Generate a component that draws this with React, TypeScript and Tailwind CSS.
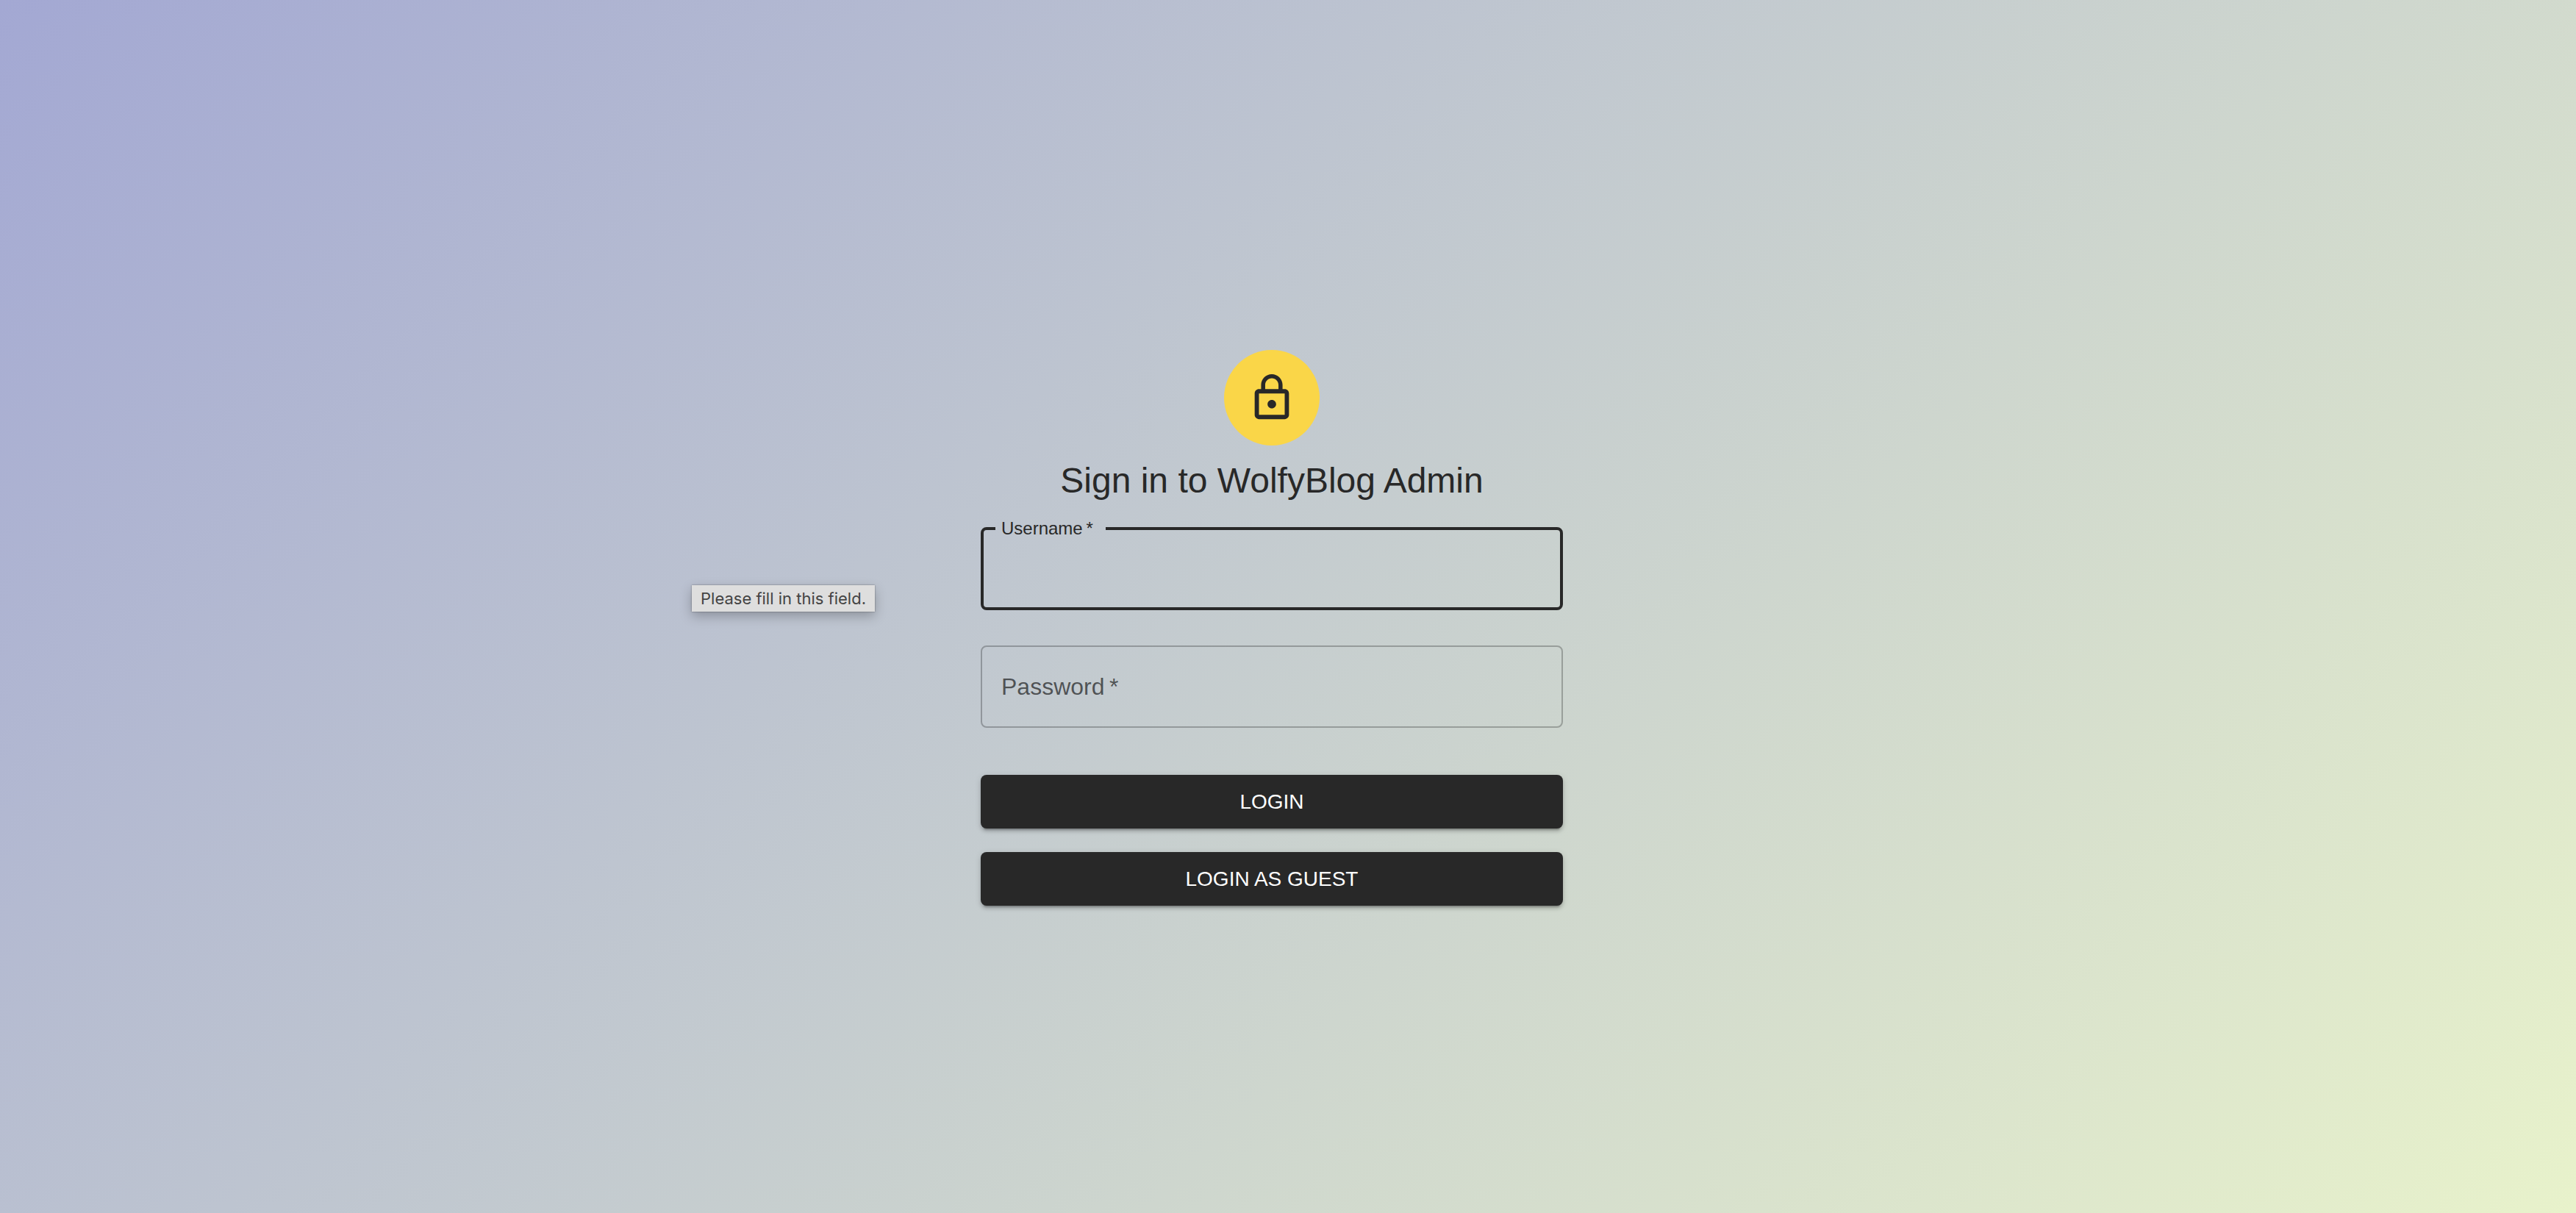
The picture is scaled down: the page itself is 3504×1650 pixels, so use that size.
import React from "react";

function LockIcon() {
  return (
    <svg viewBox="0 0 24 24" className="size-[70px]" fill="#282828" aria-hidden="true">
      <path d="M12 17c1.1 0 2-.9 2-2s-.9-2-2-2-2 .9-2 2 .9 2 2 2m6-9h-1V6c0-2.76-2.24-5-5-5S7 3.24 7 6v2H6c-1.1 0-2 .9-2 2v10c0 1.100.9 2 2 2h12c1.100 0 2-.9 2-2V10c0-1.100-.9-2-2-2M8.900 6c0-1.710 1.390-3.100 3.100-3.100s3.100 1.390 3.100 3.100v2H8.900zM18 20H6V10h12z" />
    </svg>
  );
}

function ActionButton({ type, children }: { type: "submit" | "button"; children: React.ReactNode }) {
  return (
    <button
      type={type}
      className="h-[73px] w-full rounded-lg bg-[#282828] text-[28px] leading-[49px] text-white uppercase shadow-[0_6px_2px_-4px_rgba(0,0,0,0.2),0_4px_4px_0_rgba(0,0,0,0.14),0_2px_10px_0_rgba(0,0,0,0.12)]"
    >
      {children}
    </button>
  );
}

export default function App() {
  return (
    <main className="flex min-h-screen flex-col items-center justify-center bg-[linear-gradient(135deg,#a3a8d3_0%,#e8f2cb_100%)] pt-[58px] pr-11 font-['Liberation_Sans',Arial,sans-serif] text-[#282828]">
      <div className="flex size-[130px] items-center justify-center rounded-full bg-[#fad648]">
        <LockIcon />
      </div>
      <h1 className="mt-4 text-[48px] leading-[64px]">Sign in to WolfyBlog Admin</h1>

      <form className="mt-[21px] w-full max-w-[792px]" onSubmit={(e) => e.preventDefault()}>
        <div className="relative">
          <fieldset className="rounded-lg border-4 border-[#282828]">
            <legend className="ml-4 w-[150px] px-2 text-[24px] leading-[24px]">
              <label htmlFor="username">Username{"\u2009"}*</label>
            </legend>
            <input
              id="username"
              name="username"
              type="text"
              className="block h-[95px] w-full bg-transparent px-6 text-[32px] outline-none"
            />
          </fieldset>
          <div
            role="tooltip"
            className="absolute top-[89px] right-full mr-36 bg-[#dedede] px-3 text-[22px] leading-[36px] whitespace-nowrap text-[#444444] shadow-[0_0_2px_rgba(0,0,0,0.4),0_6px_16px_rgba(0,0,0,0.25)] font-[Inter,sans-serif]"
          >
            Please fill in this field.
          </div>
        </div>

        <div className="relative mt-12">
          <input
            id="password"
            name="password"
            type="password"
            placeholder=" "
            className="peer block h-28 w-full rounded-lg border-2 border-black/25 bg-transparent px-[26px] text-[32px] outline-none"
          />
          <label
            htmlFor="password"
            className="pointer-events-none absolute inset-y-0 left-7 hidden items-center text-[32px] leading-[46px] text-black/60 peer-placeholder-shown:flex"
          >
            Password{"\u2009"}*
          </label>
        </div>

        <div className="mt-16 flex flex-col gap-8">
          <ActionButton type="submit">Login</ActionButton>
          <ActionButton type="button">Login as guest</ActionButton>
        </div>
      </form>
    </main>
  );
}
